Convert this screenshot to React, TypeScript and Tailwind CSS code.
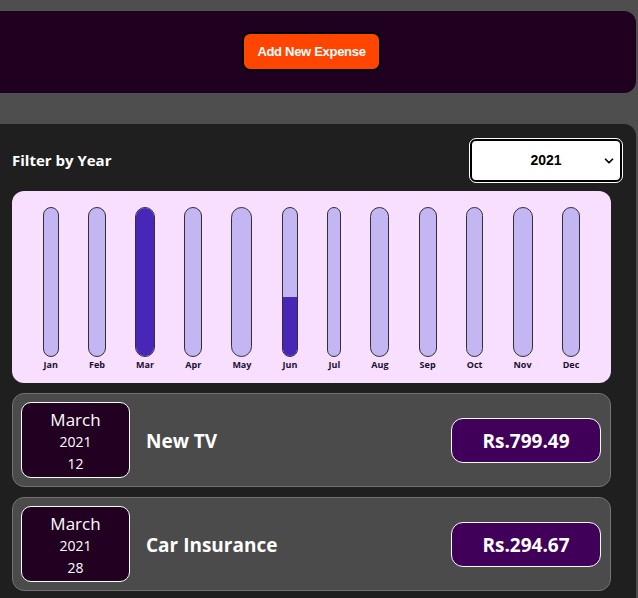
import { ChevronDown } from "lucide-react";

const months = [
  { label: "Jan", fill: 0 },
  { label: "Feb", fill: 0 },
  { label: "Mar", fill: 100 },
  { label: "Apr", fill: 0 },
  { label: "May", fill: 0 },
  { label: "Jun", fill: 40 },
  { label: "Jul", fill: 0 },
  { label: "Aug", fill: 0 },
  { label: "Sep", fill: 0 },
  { label: "Oct", fill: 0 },
  { label: "Nov", fill: 0 },
  { label: "Dec", fill: 0 },
];

const expenses = [
  { month: "March", year: "2021", day: "12", title: "New TV", amount: "Rs.799.49" },
  { month: "March", year: "2021", day: "28", title: "Car Insurance", amount: "Rs.294.67" },
];

function ChartBar({ label, fill }: { label: string; fill: number }) {
  return (
    <div className="flex flex-col items-stretch">
      <div className="relative h-[150px] w-full overflow-hidden rounded-full border border-[#313131] bg-[#c4b6f2]">
        <div
          className="absolute bottom-0 left-0 w-full bg-[#4726b8]"
          style={{ height: `${fill}%` }}
        />
      </div>
      <span className="mt-[2px] px-px text-center text-[9px] font-bold leading-[12px] text-[#1a1030]">
        {label}
      </span>
    </div>
  );
}

export default function App() {
  return (
    <div
      className="min-h-screen overflow-hidden bg-[#4e4e4e] pt-[11px]"
      style={{ fontFamily: '"Open Sans", "Noto Sans", sans-serif' }}
    >
      <div className="-ml-[13px] mr-[2px] flex h-[82px] items-center justify-center rounded-r-[12px] bg-[#200020]">
        <button
          className="-mt-px h-[39px] rounded-[8px] border-2 border-black bg-[#ff4500] px-[13px] text-[13px] font-bold tracking-[-0.3px] text-white"
          style={{ fontFamily: '"Liberation Sans", Arial, sans-serif' }}
        >
          Add New Expense
        </button>
      </div>

      <div className="-ml-[13px] mr-[2px] mt-[31px] rounded-tr-[12px] bg-[#1f1f1f] px-[25px] pb-[10px] pt-[15px]">
        <div className="-mr-[11px] flex items-center justify-between">
          <span className="text-[15px] font-bold text-white">Filter by Year</span>
          <div className="relative flex h-[43px] w-[152px] items-center justify-center rounded-[6px] border-2 border-black bg-white outline outline-1 outline-white">
            <span className="text-[14px] font-bold text-black" style={{ fontFamily: '"Liberation Sans", sans-serif' }}>
              2021
            </span>
            <ChevronDown className="absolute right-[4px] h-[14px] w-[14px] text-black" strokeWidth={3} />
          </div>
        </div>

        <div className="mt-[9px] flex h-[192px] justify-around rounded-[12px] bg-[#f8dfff] px-[16px] pt-[16px]">
          {months.map((m) => (
            <ChartBar key={m.label} label={m.label} fill={m.fill} />
          ))}
        </div>

        {expenses.map((e) => (
          <div
            key={e.title}
            className="mt-[10px] flex h-[94px] items-center rounded-[12px] border border-[#737373] bg-[#4b4b4b] pl-[8px] pr-[9px]"
          >
            <div className="flex h-[76px] w-[109px] flex-col items-center justify-center rounded-[10px] border border-white bg-[#220022] pt-[2px] text-white">
              <span className="text-[17px] leading-[22px]">{e.month}</span>
              <span className="text-[14px] leading-[22px]">{e.year}</span>
              <span className="text-[14px] leading-[21px]">{e.day}</span>
            </div>
            <h2 className="ml-[16px] mt-[3px] flex-1 text-[19px] font-bold text-white">{e.title}</h2>
            <div className="flex h-[45px] w-[150px] items-center justify-center rounded-[12px] border border-white bg-[#40005a] pt-[2px] text-[19px] font-bold text-white">
              {e.amount}
            </div>
          </div>
        ))}
      </div>
    </div>
  );
}
